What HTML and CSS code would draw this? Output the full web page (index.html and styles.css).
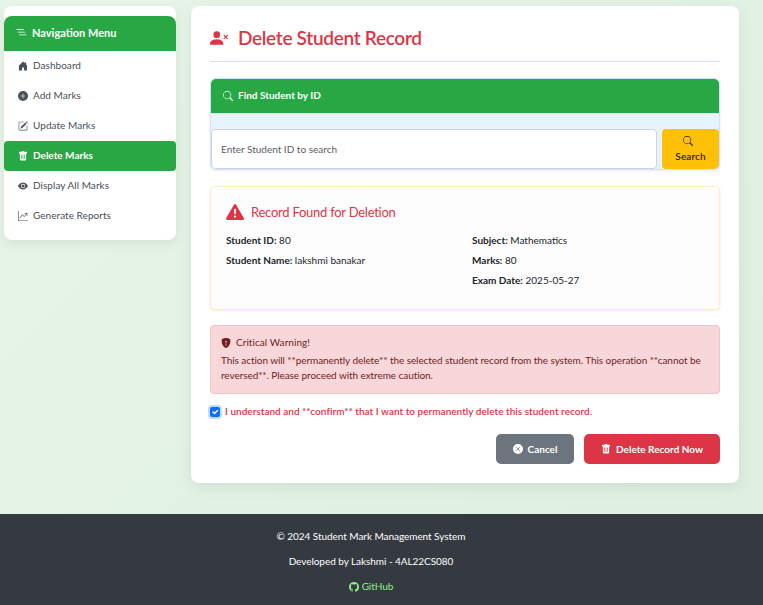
FILE: index.html
```html
<!DOCTYPE html>
<html lang="en">
<head>
<meta charset="utf-8">
<title>Delete Student Record</title>
<link rel="stylesheet" href="styles.css">
</head>
<body>
<svg class="sprite" aria-hidden="true">
  <symbol id="list" viewBox="0 0 16 16"><path d="M4.500 11.500A.5.5 0 0 1 5 11h10a.5.5 0 0 1 0 1H5a.5.5 0 0 1-.5-.5m-2-4A.5.5 0 0 1 3 7h10a.5.5 0 0 1 0 1H3a.5.5 0 0 1-.5-.5m-2-4A.5.5 0 0 1 1 3h10a.5.5 0 0 1 0 1H1a.5.5 0 0 1-.5-.5"/></symbol>
  <symbol id="house" viewBox="0 0 16 16"><path d="M6.500 14.500v-3.505c0-.245.25-.495.5-.495h2c.25 0 .5.25.5.5v3.5a.5.5 0 0 0 .5.5h4a.5.5 0 0 0 .5-.5v-7a.5.5 0 0 0-.146-.354L13 5.793V2.500a.5.5 0 0 0-.5-.5h-1a.5.5 0 0 0-.5.5v1.293L8.354 1.146a.5.5 0 0 0-.708 0l-6 6A.5.5 0 0 0 1.500 7.500v7a.5.5 0 0 0 .5.5h4a.5.5 0 0 0 .5-.5"/></symbol>
  <symbol id="plus" viewBox="0 0 16 16"><path d="M16 8A8 8 0 1 1 0 8a8 8 0 0 1 16 0M8.500 4.500a.5.5 0 0 0-1 0v3h-3a.5.5 0 0 0 0 1h3v3a.5.5 0 0 0 1 0v-3h3a.5.5 0 0 0 0-1h-3z"/></symbol>
  <symbol id="pencil" viewBox="0 0 16 16"><path d="M15.502 1.940a.5.5 0 0 1 0 .706L14.459 3.690l-2-2L13.502.646a.5.5 0 0 1 .707 0l1.293 1.293zm-1.750 2.456-2-2L4.939 9.210a.5.5 0 0 0-.121.196l-.805 2.414a.25.25 0 0 0 .316.316l2.414-.805a.5.5 0 0 0 .196-.120z"/><path fill-rule="evenodd" d="M1 13.500A1.500 1.500 0 0 0 2.500 15h11a1.500 1.500 0 0 0 1.500-1.500v-6a.5.5 0 0 0-1 0v6a.5.5 0 0 1-.5.5h-11a.5.5 0 0 1-.5-.5v-11a.5.5 0 0 1 .5-.5H9a.5.5 0 0 0 0-1H2.500A1.500 1.500 0 0 0 1 2.500z"/></symbol>
  <symbol id="trash" viewBox="0 0 16 16"><path d="M2.500 1a1 1 0 0 0-1 1v1a1 1 0 0 0 1 1H3v9a2 2 0 0 0 2 2h6a2 2 0 0 0 2-2V4h.5a1 1 0 0 0 1-1V2a1 1 0 0 0-1-1H10a1 1 0 0 0-1-1H7a1 1 0 0 0-1 1zm3 4a.5.5 0 0 1 .5.5v7a.5.5 0 0 1-1 0v-7a.5.5 0 0 1 .5-.5M8 5a.5.5 0 0 1 .5.5v7a.5.5 0 0 1-1 0v-7A.5.5 0 0 1 8 5m3 .5v7a.5.5 0 0 1-1 0v-7a.5.5 0 0 1 1 0"/></symbol>
  <symbol id="eye" viewBox="0 0 16 16"><path d="M10.500 8a2.500 2.500 0 1 1-5 0 2.500 2.500 0 0 1 5 0"/><path d="M0 8s3-5.500 8-5.500S16 8 16 8s-3 5.500-8 5.500S0 8 0 8m8 3.500a3.500 3.500 0 1 0 0-7 3.500 3.500 0 0 0 0 7"/></symbol>
  <symbol id="graph" viewBox="0 0 16 16"><path fill-rule="evenodd" d="M0 0h1v15h15v1H0zm10 3.500a.5.5 0 0 1 .5-.5h4a.5.5 0 0 1 .5.5v4a.5.5 0 0 1-1 0V4.900l-3.613 4.417a.5.5 0 0 1-.74.037L7.060 6.767l-3.656 5.027a.5.5 0 0 1-.808-.588l4-5.500a.5.5 0 0 1 .758-.06l2.609 2.610L13.445 4H10.500a.5.5 0 0 1-.5-.5"/></symbol>
  <symbol id="person-x" viewBox="0 0 16 16"><path d="M1 14s-1 0-1-1 1-4 6-4 6 3 6 4-1 1-1 1zm5-6a3 3 0 1 0 0-6 3 3 0 0 0 0 6"/><path d="M12.146 5.146a.5.5 0 0 1 .708 0L14 6.293l1.146-1.147a.5.5 0 0 1 .708.708L14.707 7l1.147 1.146a.5.5 0 0 1-.708.708L14 7.707l-1.146 1.147a.5.5 0 0 1-.708-.708L13.293 7l-1.147-1.146a.5.5 0 0 1 0-.708"/></symbol>
  <symbol id="search" viewBox="0 0 16 16"><path d="M11.742 10.344a6.500 6.500 0 1 0-1.397 1.398h-.001q.044.060.098.115l3.850 3.850a1 1 0 0 0 1.415-1.414l-3.850-3.850a1 1 0 0 0-.115-.100zM12 6.500a5.500 5.500 0 1 1-11 0 5.500 5.500 0 0 1 11 0"/></symbol>
  <symbol id="triangle" viewBox="0 0 16 16"><path d="M8.982 1.566a1.130 1.130 0 0 0-1.960 0L.165 13.233c-.457.778.091 1.767.98 1.767h13.713c.889 0 1.438-.99.98-1.767zM8 5c.535 0 .954.462.9.995l-.35 3.507a.552.552 0 0 1-1.100 0L7.100 5.995A.905.905 0 0 1 8 5m.002 6a1 1 0 1 1 0 2 1 1 0 0 1 0-2"/></symbol>
  <symbol id="shield" viewBox="0 0 16 16"><path fill-rule="evenodd" d="M8 0c-.69 0-1.843.265-2.928.56-1.110.3-2.229.655-2.887.87a1.540 1.540 0 0 0-1.044 1.262c-.596 4.477.787 7.795 2.465 9.990a11.800 11.800 0 0 0 2.517 2.453c.386.273.744.482 1.048.625.28.132.581.24.829.24s.548-.108.829-.24a7 7 0 0 0 1.048-.625 11.800 11.800 0 0 0 2.517-2.453c1.678-2.195 3.061-5.513 2.465-9.990a1.540 1.540 0 0 0-1.044-1.263 63 63 0 0 0-2.887-.87C9.843.266 8.690 0 8 0m-.55 8.502L7.100 4.995a.905.905 0 1 1 1.800 0l-.35 3.507a.552.552 0 0 1-1.100 0M8.002 12a1 1 0 1 1 0-2 1 1 0 0 1 0 2"/></symbol>
  <symbol id="x-circle" viewBox="0 0 16 16"><path d="M16 8A8 8 0 1 1 0 8a8 8 0 0 1 16 0M5.354 4.646a.5.5 0 1 0-.708.708L7.293 8l-2.647 2.646a.5.5 0 0 0 .708.708L8 8.707l2.646 2.647a.5.5 0 0 0 .708-.708L8.707 8l2.647-2.646a.5.5 0 0 0-.708-.708L8 7.293z"/></symbol>
  <symbol id="github" viewBox="0 0 16 16"><path d="M8 0C3.580 0 0 3.580 0 8c0 3.540 2.290 6.530 5.470 7.590.4.07.55-.17.55-.38 0-.19-.01-.82-.01-1.490-2.010.37-2.530-.49-2.690-.94-.09-.23-.48-.94-.82-1.130-.28-.15-.68-.52-.01-.53.63-.01 1.080.58 1.230.82.72 1.210 1.870.87 2.330.66.07-.52.28-.87.51-1.070-1.780-.2-3.640-.89-3.640-3.950 0-.87.31-1.590.82-2.150-.08-.2-.36-1.020.08-2.120 0 0 .67-.21 2.200.82.64-.18 1.320-.27 2-.27s1.360.09 2 .27c1.530-1.040 2.200-.82 2.200-.82.44 1.100.16 1.920.08 2.120.51.56.82 1.270.82 2.150 0 3.070-1.870 3.750-3.650 3.950.29.25.54.73.54 1.480 0 1.070-.01 1.930-.01 2.200 0 .21.15.46.55.38A8.010 8.010 0 0 0 16 8c0-4.420-3.580-8-8-8"/></symbol>
</svg>

<div class="layout">
  <aside class="sidebar">
    <h2 class="sidebar-title"><svg class="icon"><use href="#list"/></svg><span>Navigation Menu</span></h2>
    <nav>
      <a class="nav-item"><svg class="icon"><use href="#house"/></svg><span>Dashboard</span></a>
      <a class="nav-item"><svg class="icon"><use href="#plus"/></svg><span>Add Marks</span></a>
      <a class="nav-item"><svg class="icon"><use href="#pencil"/></svg><span>Update Marks</span></a>
      <a class="nav-item active"><svg class="icon"><use href="#trash"/></svg><span>Delete Marks</span></a>
      <a class="nav-item"><svg class="icon"><use href="#eye"/></svg><span>Display All Marks</span></a>
      <a class="nav-item"><svg class="icon"><use href="#graph"/></svg><span>Generate Reports</span></a>
    </nav>
  </aside>

  <main class="panel">
    <h1 class="page-title"><svg class="icon"><use href="#person-x"/></svg><span>Delete Student Record</span></h1>

    <section class="search-card">
      <h2 class="search-head"><svg class="icon"><use href="#search"/></svg><span>Find Student by ID</span></h2>
      <div class="search-row">
        <input class="search-input" type="text" placeholder="Enter Student ID to search">
        <button class="search-btn"><svg class="icon"><use href="#search"/></svg><span>Search</span></button>
      </div>
    </section>

    <section class="record">
      <h2 class="record-title"><svg class="icon"><use href="#triangle"/></svg><span>Record Found for Deletion</span></h2>
      <div class="record-grid">
        <div>
          <p><strong>Student ID:</strong> 80</p>
          <p><strong>Student Name:</strong> lakshmi banakar</p>
        </div>
        <div>
          <p><strong>Subject:</strong> Mathematics</p>
          <p><strong>Marks:</strong> 80</p>
          <p><strong>Exam Date:</strong> 2025-05-27</p>
        </div>
      </div>
    </section>

    <section class="alert">
      <h2 class="alert-title"><svg class="icon"><use href="#shield"/></svg><span>Critical Warning!</span></h2>
      <p>This action will **permanently delete** the selected student record from the system. This operation **cannot be reversed**. Please proceed with extreme caution.</p>
    </section>

    <label class="confirm">
      <span class="checkbox"><svg viewBox="0 0 20 20"><path d="m6 10 3 3 6-6"/></svg></span>
      <span>I understand and **confirm** that I want to permanently delete this student record.</span>
    </label>

    <div class="actions">
      <button class="btn cancel"><svg class="icon"><use href="#x-circle"/></svg><span>Cancel</span></button>
      <button class="btn danger"><svg class="icon"><use href="#trash"/></svg><span>Delete Record Now</span></button>
    </div>
  </main>
</div>

<footer class="footer">
  <p>© 2024 Student Mark Management System</p>
  <p>Developed by Lakshmi - 4AL22CS080</p>
  <a><svg class="icon"><use href="#github"/></svg><span>GitHub</span></a>
</footer>
</body>
</html>
```
FILE: styles.css
```css
* { box-sizing: border-box; }

body {
  margin: 0;
  height: 605px;
  display: flex;
  flex-direction: column;
  overflow: hidden;
  font: 400 10px/15px Lato, "Liberation Sans", sans-serif;
  color: #212529;
  background: linear-gradient(135deg, #e8f5e9, #dcefe0);
}

h1, h2, p { margin: 0; }

.sprite { display: none; }

.icon {
  width: 10px;
  height: 10px;
  flex: none;
  fill: currentColor;
}

.layout {
  flex: 1;
  display: flex;
  align-items: flex-start;
  gap: 15px;
  padding: 6px 24px 0 4px;
}

.sidebar {
  width: 172px;
  padding: 10px 0 9px;
  border-radius: 8px;
  background: #fff;
  box-shadow: 0 4px 12px rgba(0, 0, 0, .08);
}

.sidebar-title {
  display: flex;
  align-items: center;
  gap: 5px;
  height: 35px;
  padding: 0 0 2px 12px;
  border-radius: 8px 8px 0 0;
  background: #28a745;
  color: #fff;
  font-size: 11px;
  font-weight: 700;
}

.sidebar-title .icon { width: 11px; height: 11px; }

.nav-item {
  display: flex;
  align-items: center;
  gap: 5px;
  height: 30px;
  padding-left: 14px;
  color: #495057;
  letter-spacing: .04px;
}

.nav-item span { padding-bottom: 2px; }

.nav-item.active {
  border-radius: 4px;
  background: #28a745;
  color: #fff;
  font-weight: 700;
  letter-spacing: 0;
}

.panel {
  flex: 1;
  height: 477px;
  padding: 19px 19px 0;
  border-radius: 8px;
  background: #fff;
  box-shadow: 0 4px 15px rgba(0, 0, 0, .08);
}

.page-title {
  display: flex;
  align-items: center;
  gap: 10px;
  height: 37px;
  padding-bottom: 10px;
  border-bottom: 1px solid #f5d5dd;
  color: #dc3545;
  font-size: 19px;
  font-weight: 600;
  letter-spacing: -.3px;
}

.page-title span { padding-bottom: 2px; }

.page-title .icon { width: 18px; height: 18px; }

.search-card {
  height: 92px;
  margin-top: 16px;
  border: 1px solid #cfe2ff;
  border-radius: 6px;
  background: #e7f3ff;
  box-shadow: 0 1px 3px rgba(0, 0, 0, .08);
  overflow: hidden;
}

.search-head {
  display: flex;
  align-items: center;
  gap: 5px;
  height: 35px;
  padding-left: 12px;
  border-bottom: 1px solid #e0e5ec;
  background: #28a745;
  color: #fff;
  font-size: 10px;
  font-weight: 700;
}

.search-head span { padding-bottom: 2px; }

.search-row {
  display: flex;
  gap: 5px;
  height: 40px;
  margin-top: 15px;
}

.search-input {
  flex: 1;
  min-width: 0;
  padding: 0 9px;
  border: 1px solid #ced4da;
  border-radius: 4px;
  background: #fff;
  font: inherit;
}

.search-input::placeholder { color: #5a6167; opacity: 1; }

.search-btn {
  display: flex;
  flex-direction: column;
  align-items: center;
  gap: 3px;
  width: 57px;
  padding: 7px 0 0;
  border: 0;
  border-radius: 4px;
  background: #ffc107;
  color: #212529;
  font: 600 10px/15px Lato, sans-serif;
}

.search-btn .icon { margin-right: 5px; }
.search-btn span { letter-spacing: .1px; }

.record {
  height: 124px;
  margin-top: 16px;
  padding: 15px;
  border: 1px solid #ffeeba;
  border-radius: 5px;
  background: #fdfdfe;
  box-shadow: 0 1px 3px rgba(0, 0, 0, .08);
}

.record-title {
  display: flex;
  align-items: center;
  gap: 7px;
  height: 20px;
  color: #dc3545;
  font-size: 13px;
  font-weight: 400;
  letter-spacing: -.25px;
}

.record-title .icon { width: 18px; height: 18px; }

.record-grid {
  display: grid;
  grid-template-columns: 246px 1fr;
  margin-top: 11px;
}

.record-grid p { margin-bottom: 5px; }

.record strong { font-weight: 700; }

.alert {
  height: 69px;
  margin-top: 15px;
  padding: 9px 10px;
  border: 1px solid #f5c2c7;
  border-radius: 4px;
  background: #f8d7da;
  color: #721c24;
}

.alert p { letter-spacing: -.07px; }

.alert-title {
  display: flex;
  align-items: center;
  gap: 5px;
  height: 15px;
  margin-bottom: 3px;
  font-size: 10px;
  font-weight: 400;
  letter-spacing: .06px;
}

.confirm {
  display: flex;
  align-items: center;
  gap: 5px;
  height: 15px;
  margin-top: 10px;
  color: #dc3545;
  font-weight: 600;
  letter-spacing: .02px;
}

.checkbox {
  width: 10px;
  height: 10px;
  border-radius: 2px;
  background: #0d6efd;
  box-shadow: 0 0 0 2px #c2dbfe;
}

.checkbox svg {
  display: block;
  width: 10px;
  height: 10px;
  fill: none;
  stroke: #fff;
  stroke-width: 3;
  stroke-linecap: round;
  stroke-linejoin: round;
}

.actions {
  display: flex;
  justify-content: flex-end;
  gap: 10px;
  margin-top: 15px;
}

.btn {
  display: flex;
  align-items: center;
  justify-content: center;
  gap: 5px;
  height: 30px;
  padding: 0;
  border: 0;
  border-radius: 5px;
  color: #fff;
  font: 700 10px/15px Lato, sans-serif;
}

.cancel { width: 78px; background: #6c757d; }
.danger { width: 136px; background: #dc3545; }

.footer {
  display: flex;
  flex-direction: column;
  align-items: center;
  gap: 10px;
  height: 91px;
  padding: 15px 21px 0 0;
  background: #343a40;
  color: #fff;
  letter-spacing: -.05px;
}

.footer a {
  display: flex;
  align-items: center;
  gap: 3px;
  color: #90ee90;
}
```
